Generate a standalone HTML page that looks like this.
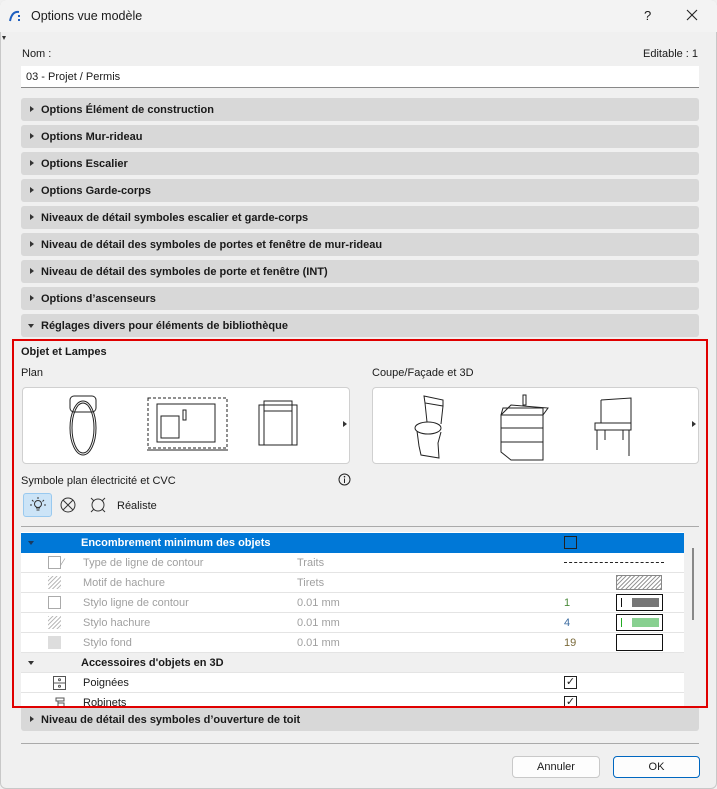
<!DOCTYPE html><html><head><meta charset="utf-8"><style>
*{box-sizing:border-box;margin:0;padding:0}
body{width:717px;height:789px;background:#f0f0f0;font-family:"Liberation Sans",sans-serif;font-size:11px;color:#1a1a1a;position:relative;overflow:hidden}
.a{position:absolute}
.win{position:absolute;left:0;top:0;width:717px;height:789px;border:1px solid #c8c8c8;border-radius:6px}
.hdr{position:absolute;left:21px;width:678px;height:23px;background:#d8d8d8;border-radius:3px;font-weight:bold;font-size:11px;line-height:25px;padding-left:20px}
.hdr:before{content:"";position:absolute;left:9px;top:8px;border-left:4px solid #333;border-top:3.5px solid transparent;border-bottom:3.5px solid transparent}
.hdr.open:before{left:7px;top:10px;border-top:4px solid #333;border-left:3.5px solid transparent;border-right:3.5px solid transparent;border-bottom:0}
.row{position:absolute;left:21px;width:663px;height:20px;background:#fff;border-bottom:1px solid #e4e4e4;line-height:21px;font-size:11px}
.g{color:#a0a0a0}
.btn{position:absolute;height:22px;background:#fdfdfd;border:1px solid #c9c9c9;border-radius:4px;text-align:center;line-height:21px;font-size:11px}
.box{position:absolute;background:#fff;border:1px solid #d0d0d0;border-radius:4px}
</style></head><body>
<div class="win"></div>
<div class="a" style="left:0;top:0;width:717px;height:32px;background:#f3f3f3;border-radius:6px 6px 0 0"></div>
<svg class="a" style="left:8px;top:9px" width="14" height="14"><path d="M2 12 Q4 2 11 3" stroke="#1f5fbf" stroke-width="2" fill="none"/><rect x="10" y="6" width="2" height="2" fill="#1f5fbf"/><rect x="10" y="10" width="2" height="2" fill="#1f5fbf"/></svg>
<div class="a" style="left:31px;top:9px;font-size:12.5px">Options vue modèle</div>
<div class="a" style="left:644px;top:8px;font-size:13px">?</div>
<svg class="a" style="left:686px;top:9px" width="12" height="12"><path d="M1 1L11 11M11 1L1 11" stroke="#222" stroke-width="1.1"/></svg>
<div class="a" style="left:2px;top:36px;border-top:4px solid #333;border-left:2.5px solid transparent;border-right:2.5px solid transparent"></div>
<div class="a" style="left:22px;top:48px">Nom :</div>
<div class="a" style="left:643px;top:48px">Editable : 1</div>
<div class="a" style="left:21px;top:66px;width:678px;height:22px;background:#fff;border-bottom:1px solid #888;padding-left:5px;line-height:22px">03 - Projet / Permis</div>
<div class="hdr" style="top:98px">Options Élément de construction</div>
<div class="hdr" style="top:125px">Options Mur-rideau</div>
<div class="hdr" style="top:152px">Options Escalier</div>
<div class="hdr" style="top:179px">Options Garde-corps</div>
<div class="hdr" style="top:206px">Niveaux de détail symboles escalier et garde-corps</div>
<div class="hdr" style="top:233px">Niveau de détail des symboles de portes et fenêtre de mur-rideau</div>
<div class="hdr" style="top:260px">Niveau de détail des symboles de porte et fenêtre (INT)</div>
<div class="hdr" style="top:287px">Options d’ascenseurs</div>
<div class="hdr open" style="top:314px">Réglages divers pour éléments de bibliothèque</div>
<div class="a" style="left:21px;top:346px;font-weight:bold">Objet et Lampes</div>
<div class="a" style="left:21px;top:367px">Plan</div>
<div class="a" style="left:372px;top:367px">Coupe/Façade et 3D</div>
<div class="box" style="left:22px;top:387px;width:328px;height:77px">
<svg width="328" height="77" fill="none" stroke="#222" stroke-width="1"><rect x="47" y="8" width="26" height="16" rx="4"/><ellipse cx="60" cy="40" rx="13" ry="27"/><ellipse cx="60" cy="40" rx="11" ry="25"/><rect x="125" y="10" width="79" height="50" stroke-dasharray="3 2"/><rect x="134" y="16" width="58" height="38"/><rect x="138" y="28" width="18" height="22"/><rect x="160" y="22" width="3" height="10"/><line x1="124" y1="62" x2="205" y2="62"/><rect x="236" y="17" width="38" height="40"/><rect x="241" y="13" width="28" height="10"/><line x1="241" y1="23" x2="241" y2="57"/><line x1="269" y1="23" x2="269" y2="57"/></svg>
<div class="a" style="left:320px;top:33px;border-left:4px solid #333;border-top:3.5px solid transparent;border-bottom:3.5px solid transparent"></div></div>
<div class="box" style="left:372px;top:387px;width:327px;height:77px">
<svg width="327" height="77" fill="none" stroke="#222" stroke-width="1"><path d="M51 8 L70 12 L70 18 L52 15 Z"/><path d="M52 15 L54 34 M70 18 L68 36"/><ellipse cx="55" cy="40" rx="13" ry="6"/><path d="M44 43 L46 58 L48 67 L66 70 L65 55 L68 44"/><path d="M130 20 L170 20 L170 72 L138 72 L128 64 L128 27 Z"/><path d="M128 27 L170 27 M128 40 L170 40 M128 54 L170 54"/><path d="M128 27 L138 17 L175 20 L170 27"/><rect x="150" y="7" width="3" height="10"/><path d="M228 12 L258 10 L258 42 M228 12 L228 35 M222 35 L258 35 L258 42 L222 42 Z M224 42 L224 62 M232 42 L232 52 M250 42 L250 52 M256 42 L256 68"/></svg>
<div class="a" style="left:319px;top:33px;border-left:4px solid #333;border-top:3.5px solid transparent;border-bottom:3.5px solid transparent"></div></div>
<div class="a" style="left:21px;top:475px">Symbole plan électricité et CVC</div>
<svg class="a" style="left:338px;top:473px" width="13" height="13"><circle cx="6.5" cy="6.5" r="5.5" fill="none" stroke="#222"/><line x1="6.5" y1="5.5" x2="6.5" y2="10" stroke="#222"/><circle cx="6.5" cy="3.7" r=".8" fill="#222"/></svg>
<div class="a" style="left:23px;top:493px;width:29px;height:24px;background:#cce4f7;border:1px solid #99c9ef;border-radius:3px"></div>
<svg class="a" style="left:29px;top:496px" width="18" height="18" fill="none" stroke="#333"><circle cx="9" cy="8" r="3.5"/><path d="M7 12 h4 M7.5 14 h3 M9 1v2 M3 4l1.5 1.5 M15 4l-1.5 1.5 M1 9h2 M15 9h2"/></svg>
<svg class="a" style="left:59px;top:496px" width="18" height="18" fill="none" stroke="#333"><circle cx="9" cy="9" r="7"/><path d="M4 4l10 10 M14 4L4 14"/></svg>
<svg class="a" style="left:88px;top:496px" width="20" height="18" fill="none" stroke="#333"><circle cx="10" cy="9" r="6"/><path d="M3 2l3 3 M17 2l-3 3 M3 16l3-3 M17 16l-3-3"/></svg>
<div class="a" style="left:117px;top:500px">Réaliste</div>
<div class="a" style="left:21px;top:526px;width:678px;height:1px;background:#aaa"></div>
<div class="a" style="left:21px;top:532px;width:663px;height:176px;background:#fff;overflow:hidden">
<div class="row" style="top:1px;left:0;background:#0078d7;color:#fff;font-weight:bold;border:0"><span class="a" style="left:7px;top:8px;border-top:4px solid #1a3a60;border-left:3.5px solid transparent;border-right:3.5px solid transparent"></span><span class="a" style="left:60px">Encombrement minimum des objets</span><span class="a" style="left:543px;top:3px;width:13px;height:13px;border:1px solid #222"></span></div>
<div class="row g" style="top:21px;left:0"><span class="a" style="left:27px;top:3px;width:13px;height:13px;border:1px solid #aaa"></span><span class="a" style="left:41px">⁄</span><span class="a" style="left:62px">Type de ligne de contour</span><span class="a" style="left:276px">Traits</span><span class="a" style="left:543px;top:9px;width:100px;border-top:1px dashed #222"></span></div>
<div class="row g" style="top:41px;left:0"><span class="a" style="left:27px;top:3px;width:13px;height:13px;background:repeating-linear-gradient(135deg,#bbb 0 1px,#fff 1px 3px)"></span><span class="a" style="left:62px">Motif de hachure</span><span class="a" style="left:276px">Tirets</span><span class="a" style="left:595px;top:2px;width:46px;height:15px;border:1px solid #888;background:repeating-linear-gradient(135deg,#999 0 1px,#fff 1px 3px)"></span></div>
<div class="row g" style="top:61px;left:0"><span class="a" style="left:27px;top:3px;width:13px;height:13px;border:1px solid #aaa"></span><span class="a" style="left:62px">Stylo ligne de contour</span><span class="a" style="left:276px">0.01 mm</span><span class="a" style="left:543px;color:#4a8a3a">1</span><span class="a" style="left:595px;top:1px;width:47px;height:17px;border:1px solid #111"><span class="a" style="left:4px;top:3px;width:1px;height:9px;background:#111"></span><span class="a" style="left:15px;top:3px;width:27px;height:9px;background:#777"></span></span></div>
<div class="row g" style="top:81px;left:0"><span class="a" style="left:27px;top:3px;width:13px;height:13px;background:repeating-linear-gradient(135deg,#bbb 0 1px,#fff 1px 3px)"></span><span class="a" style="left:62px">Stylo hachure</span><span class="a" style="left:276px">0.01 mm</span><span class="a" style="left:543px;color:#3a6aa0">4</span><span class="a" style="left:595px;top:1px;width:47px;height:17px;border:1px solid #111"><span class="a" style="left:4px;top:3px;width:1px;height:9px;background:#2a2"></span><span class="a" style="left:15px;top:3px;width:27px;height:9px;background:#88d090"></span></span></div>
<div class="row g" style="top:101px;left:0"><span class="a" style="left:27px;top:3px;width:13px;height:13px;background:#ddd"></span><span class="a" style="left:62px">Stylo fond</span><span class="a" style="left:276px">0.01 mm</span><span class="a" style="left:543px;color:#7a6a3a">19</span><span class="a" style="left:595px;top:1px;width:47px;height:17px;border:1px solid #111"></span></div>
<div class="row" style="top:121px;left:0;background:#f0f0f0;font-weight:bold"><span class="a" style="left:7px;top:8px;border-top:4px solid #333;border-left:3.5px solid transparent;border-right:3.5px solid transparent"></span><span class="a" style="left:60px">Accessoires d'objets en 3D</span></div>
<div class="row" style="top:141px;left:0"><svg class="a" style="left:32px;top:3px" width="13" height="14" fill="none" stroke="#555"><rect x=".5" y=".5" width="12" height="13"/><line x1=".5" y1="7" x2="12.5" y2="7"/><circle cx="6.5" cy="3.7" r="1"/><circle cx="6.5" cy="10.3" r="1"/></svg><span class="a" style="left:62px">Poignées</span><span class="a" style="left:543px;top:3px;width:13px;height:13px;border:1px solid #222;font-size:11px;line-height:11px;text-align:center">✓</span></div>
<div class="row" style="top:161px;left:0"><svg class="a" style="left:33px;top:3px" width="13" height="13" fill="none" stroke="#555"><path d="M2 2h8v3H2zM4 5v7h6V7H4"/></svg><span class="a" style="left:62px">Robinets</span><span class="a" style="left:543px;top:3px;width:13px;height:13px;border:1px solid #222;font-size:11px;line-height:11px;text-align:center">✓</span></div>
</div>
<div class="a" style="left:692px;top:548px;width:2px;height:72px;background:#888"></div>
<div class="a" style="left:12px;top:339px;width:696px;height:369px;border:2px solid #e00000"></div>
<div class="hdr" style="top:708px;border-radius:0 0 3px 3px">Niveau de détail des symboles d’ouverture de toit</div>
<div class="a" style="left:21px;top:743px;width:678px;height:1px;background:#aaa"></div>
<div class="btn" style="left:512px;top:756px;width:88px">Annuler</div>
<div class="btn" style="left:613px;top:756px;width:87px;border:1px solid #0067c0">OK</div>
</body></html>
